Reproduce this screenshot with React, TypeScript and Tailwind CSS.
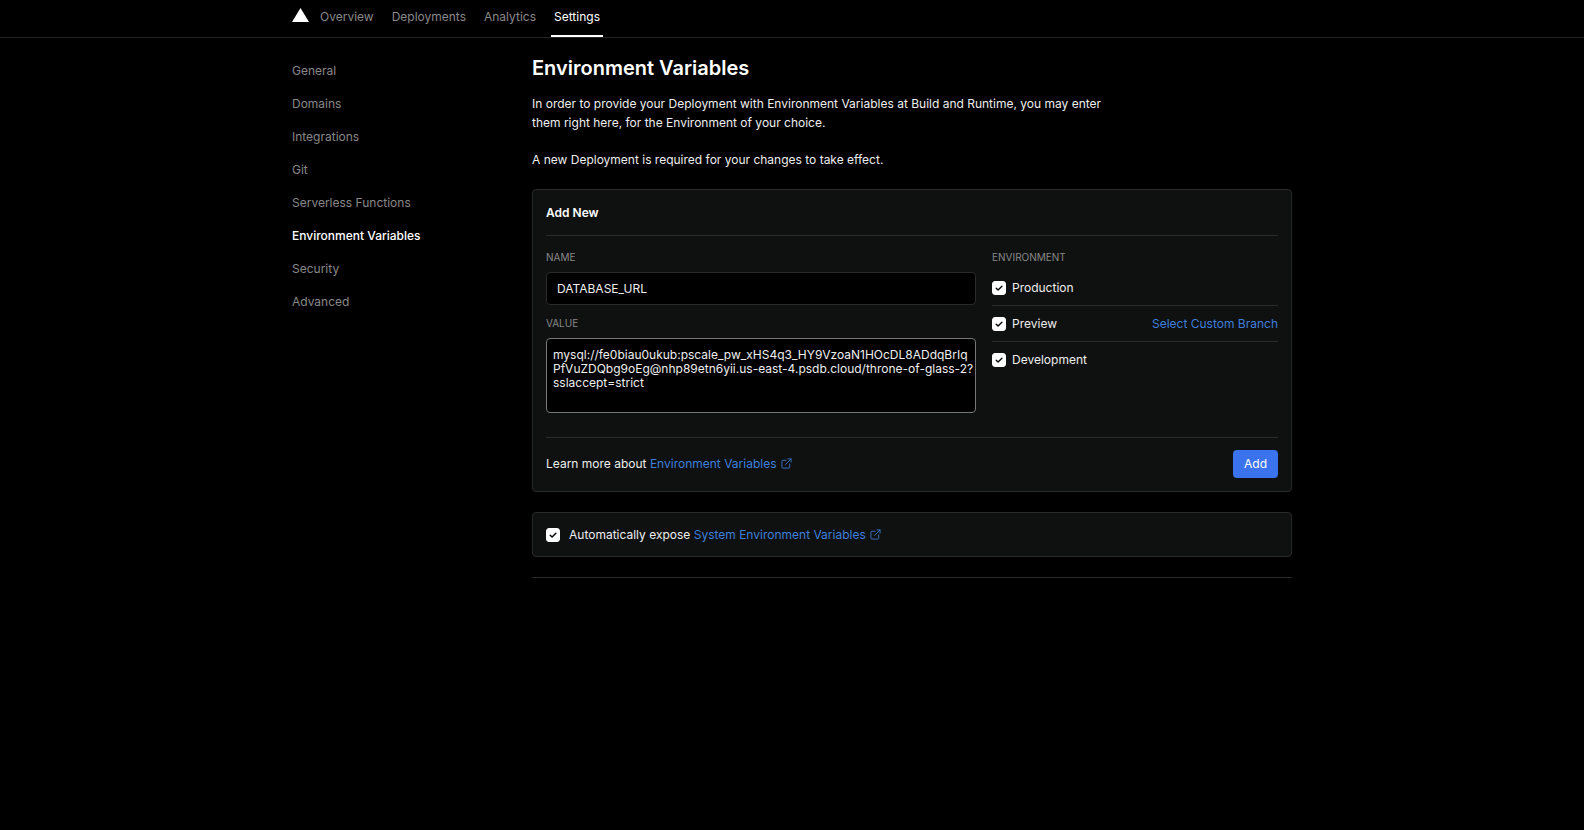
import React, { useState } from 'react';

const NAV_LINKS = ['Overview', 'Deployments', 'Analytics', 'Settings'];

const SIDEBAR_LINKS = [
  'General',
  'Domains',
  'Integrations',
  'Git',
  'Serverless Functions',
  'Environment Variables',
  'Security',
  'Advanced',
];

const ExternalIcon: React.FC = () => (
  <svg
    viewBox="0 0 24 24"
    className="ml-1 inline-block size-[11px] align-[-1px]"
    fill="none"
    stroke="currentColor"
    strokeWidth="1.8"
    strokeLinecap="round"
    strokeLinejoin="round"
    aria-hidden="true"
  >
    <path d="M19 13v7a2 2 0 0 1-2 2H4a2 2 0 0 1-2-2V7a2 2 0 0 1 2-2h7" />
    <path d="M15 2h7v7" />
    <path d="M10 14 22 2" />
  </svg>
);

interface CheckboxProps {
  id: string;
  checked: boolean;
  onChange: () => void;
}

const Checkbox: React.FC<CheckboxProps> = ({ id, checked, onChange }) => (
  <span className="grid shrink-0">
    <input
      id={id}
      type="checkbox"
      checked={checked}
      onChange={onChange}
      className="col-start-1 row-start-1 size-3.5 cursor-pointer appearance-none rounded-[3px] border border-[#666] checked:border-white checked:bg-white"
    />
    {checked && (
      <svg
        viewBox="0 0 14 14"
        className="pointer-events-none col-start-1 row-start-1 size-3.5"
        fill="none"
        stroke="#000"
        strokeWidth="1.4"
        strokeLinecap="round"
        strokeLinejoin="round"
        aria-hidden="true"
      >
        <path d="M4.2 7.2 6.1 9 9.9 5.2" />
      </svg>
    )}
  </span>
);

const Header: React.FC = () => (
  <header className="border-b border-[#222]">
    <div className="mx-auto flex h-[37px] max-w-[1000px] items-stretch">
      <a href="#" aria-label="Home" className="mr-2 pt-2">
        <svg viewBox="0 0 17 14" className="h-3.5 w-[17px]" aria-hidden="true">
          <path d="M8.5 0 17 14H0z" fill="#fff" />
        </svg>
      </a>
      <nav className="flex gap-3">
        {NAV_LINKS.map((link) => (
          <a
            key={link}
            href="#"
            className={`border-b-2 px-[3px] pt-2 leading-[18px] ${
              link === 'Settings' ? 'border-white text-white' : 'border-transparent text-[#888]'
            }`}
          >
            {link}
          </a>
        ))}
      </nav>
    </div>
  </header>
);

const Sidebar: React.FC = () => (
  <nav className="flex w-60 shrink-0 flex-col pt-4">
    {SIDEBAR_LINKS.map((link) => (
      <a
        key={link}
        href="#"
        className={`h-[33px] leading-[33px] ${
          link === 'Environment Variables' ? 'font-medium text-white' : 'text-[#888]'
        }`}
      >
        {link}
      </a>
    ))}
  </nav>
);

export default function App() {
  const [name, setName] = useState('DATABASE_URL');
  const [value, setValue] = useState(
    'mysql://fe0biau0ukub:pscale_pw_xHS4q3_HY9VzoaN1HOcDL8ADdqBrIqPfVuZDQbg9oEg@nhp89etn6yii.us-east-4.psdb.cloud/throne-of-glass-2?sslaccept=strict'
  );
  const [targets, setTargets] = useState<Record<string, boolean>>({
    Production: true,
    Preview: true,
    Development: true,
  });
  const [expose, setExpose] = useState(true);

  return (
    <div className="min-h-screen bg-black font-['Inter',sans-serif] text-[12px] text-[#eee]">
      <Header />

      <div className="mx-auto flex max-w-[1000px]">
        <Sidebar />

        <main className="min-w-0 flex-1 pt-4">
          <h1 className="text-[20px] leading-7 font-semibold text-white">Environment Variables</h1>
          <div className="mt-3 max-w-[580px] space-y-[18px] leading-[19px]">
            <p>
              In order to provide your Deployment with Environment Variables at Build and Runtime, you may enter them
              right here, for the Environment of your choice.
            </p>
            <p>A new Deployment is required for your changes to take effect.</p>
          </div>

          {/* Add new variable */}
          <section className="mt-5 rounded border border-[#2a2a2a] bg-[#0f1110] px-[13px]">
            <h2 className="border-b border-[#2a2a2a] pt-[15px] pb-3.5 leading-4 font-semibold text-white">Add New</h2>

            <div className="flex gap-4 pt-3 pb-6">
              <div className="min-w-0 flex-1">
                <label htmlFor="name" className="block text-[10px] leading-[18px] text-[#888]">
                  NAME
                </label>
                <input
                  id="name"
                  type="text"
                  value={name}
                  onChange={(e) => setName(e.target.value)}
                  className="mt-1.5 block h-[33px] w-full rounded border border-[#2a2a2a] bg-black px-2.5 outline-none"
                />
                <label htmlFor="value" className="mt-[9px] block text-[10px] leading-[18px] text-[#888]">
                  VALUE
                </label>
                <textarea
                  id="value"
                  value={value}
                  onChange={(e) => setValue(e.target.value)}
                  spellCheck={false}
                  className="mt-1.5 block h-[75px] w-full resize-none rounded border border-[#777] bg-black py-[9px] pl-1.5 leading-[14px] break-all outline-none"
                />
              </div>

              <fieldset className="w-[286px] shrink-0">
                <legend className="text-[10px] leading-[18px] text-[#888]">ENVIRONMENT</legend>
                <div className="mt-1 divide-y divide-[#2a2a2a]">
                  {Object.keys(targets).map((target) => (
                    <div key={target} className="flex h-9 items-center">
                      <Checkbox
                        id={target}
                        checked={targets[target]}
                        onChange={() => setTargets({ ...targets, [target]: !targets[target] })}
                      />
                      <label htmlFor={target} className="ml-1.5">
                        {target}
                      </label>
                      {target === 'Preview' && (
                        <a href="#" className="ml-auto text-[#3f7fdc]">
                          Select Custom Branch
                        </a>
                      )}
                    </div>
                  ))}
                </div>
              </fieldset>
            </div>

            <div className="flex items-center justify-between border-t border-[#2a2a2a] pt-3 pb-[13px]">
              <p>
                Learn more about{' '}
                <a href="#" className="text-[#3f7fdc]">
                  Environment Variables
                  <ExternalIcon />
                </a>
              </p>
              <button type="button" className="h-7 rounded bg-[#3b73ee] px-[11px] text-white">
                Add
              </button>
            </div>
          </section>

          {/* System variables */}
          <section className="mt-5 flex h-[45px] items-center rounded border border-[#2a2a2a] bg-[#0f1110] px-[13px]">
            <Checkbox id="expose" checked={expose} onChange={() => setExpose(!expose)} />
            <label htmlFor="expose" className="ml-[9px]">
              Automatically expose{' '}
              <a href="#" className="text-[#3f7fdc]">
                System Environment Variables
                <ExternalIcon />
              </a>
            </label>
          </section>

          <hr className="mt-5 border-[#2a2a2a]" />
        </main>
      </div>
    </div>
  );
}
